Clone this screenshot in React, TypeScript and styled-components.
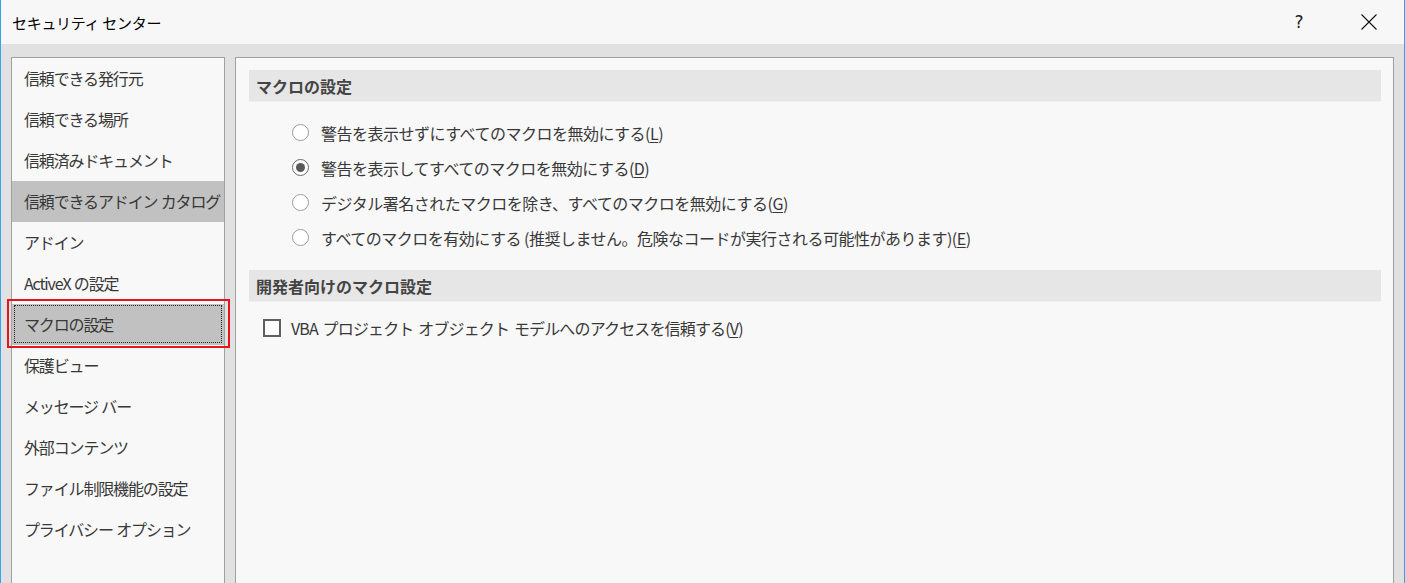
import React from "react"
import styled, { createGlobalStyle } from "styled-components"

const GlobalStyle = createGlobalStyle`
    html, body {
        margin: 0;
        padding: 0;
        height: 100%;
        overflow: hidden;
        background: #e1e1e1;
    }
    #root {
        height: 100%;
    }
`

const FONT = `"Noto Sans CJK JP", "Noto Sans", sans-serif`

const Window = styled.div`
    display: flex;
    flex-direction: column;
    height: 100vh;
    box-sizing: border-box;
    border-left: 1px solid #35a2ee;
    border-right: 1px solid #35a2ee;
    background: #e1e1e1;
    font-family: ${FONT};
    color: #3a3a3a;
`

const TitleBar = styled.div`
    display: flex;
    align-items: center;
    height: 44px;
    flex-shrink: 0;
    background: #f7f7f7;
    padding-left: 11px;
`

const Title = styled.div`
    flex: 1;
    font-size: 15px;
    color: #000;
    letter-spacing: -0.3px;
`

const TitleButton = styled.div`
    width: 70px;
    height: 44px;
    display: flex;
    align-items: center;
    justify-content: center;
    font-family: "DejaVu Sans", sans-serif;
    font-size: 17px;
    color: #222;
`

const Body = styled.div`
    flex: 1;
    display: flex;
    gap: 10px;
    padding: 13px 10px 0 10px;
    min-height: 0;
`

const Panel = styled.div<{ $grow?: boolean }>`
    box-sizing: border-box;
    background: #f8f8f8;
    border: 1px solid #a0a0a0;
    border-bottom: none;
    ${p => (p.$grow ? "flex: 1;" : "width: 214px; flex-shrink: 0;")}
`

const NavList = styled.div`
    display: flex;
    flex-direction: column;
`

const NavItem = styled.div<{ $selected?: boolean; $focused?: boolean }>`
    position: relative;
    height: 41px;
    box-sizing: border-box;
    display: flex;
    align-items: center;
    padding: 0 0 2px 12px;
    font-size: 16px;
    letter-spacing: -1.15px;
    word-spacing: 1px;
    white-space: nowrap;
    color: #383838;
    background: ${p => (p.$selected ? "#c1c1c1" : "transparent")};
    ${p =>
        p.$focused &&
        `
        &::before {
            content: "";
            position: absolute;
            inset: 1px 2px 2px 2px;
            border: 1px dotted #222;
        }
    `}
`

const Highlight = styled.div`
    position: absolute;
    top: -5px;
    bottom: -3px;
    left: -5px;
    right: -6px;
    border: 2px solid #e8141b;
    pointer-events: none;
`

const Content = styled.div`
    display: flex;
    flex-direction: column;
    padding: 12px 12px 0 13px;
`

const SectionHeader = styled.div`
    height: 32px;
    box-sizing: border-box;
    display: flex;
    align-items: center;
    padding-left: 7px;
    background: #e6e6e6;
    border-bottom: 1px solid #efefef;
    font-size: 16px;
    font-weight: bold;
    color: #444;
`

const OptionGroup = styled.div<{ $indent: number; $top: number; $bottom: number }>`
    display: flex;
    flex-direction: column;
    padding-left: ${p => p.$indent}px;
    margin: ${p => p.$top}px 0 ${p => p.$bottom}px;
`

const OptionRow = styled.label`
    height: 35px;
    display: flex;
    align-items: center;
    gap: 12px;
    font-size: 16px;
    letter-spacing: -0.5px;
    white-space: nowrap;
    color: #383838;
`

const Radio = styled.span<{ $checked?: boolean }>`
    position: relative;
    width: 17px;
    height: 17px;
    box-sizing: border-box;
    border-radius: 50%;
    border: 1px solid ${p => (p.$checked ? "#6a6a6a" : "#9a9a9a")};
    background: #fff;
    flex-shrink: 0;
    ${p =>
        p.$checked &&
        `
        &::after {
            content: "";
            position: absolute;
            left: 3px;
            top: 3px;
            width: 9px;
            height: 9px;
            border-radius: 50%;
            background: #5a5a5a;
        }
    `}
`

const Checkbox = styled.span`
    width: 18px;
    height: 18px;
    box-sizing: border-box;
    border: 2px solid #5f5f5f;
    background: #fff;
    flex-shrink: 0;
    margin-right: -2px;
`

const CheckLabel = styled.span`
    letter-spacing: -0.85px;
    word-spacing: 2px;
`

const Key = styled.span`
    text-decoration: underline;
    text-underline-offset: 2px;
`

const navItems = [
    "信頼できる発行元",
    "信頼できる場所",
    "信頼済みドキュメント",
    "信頼できるアドイン カタログ",
    "アドイン",
    "ActiveX の設定",
    "マクロの設定",
    "保護ビュー",
    "メッセージ バー",
    "外部コンテンツ",
    "ファイル制限機能の設定",
    "プライバシー オプション",
]

const radios = [
    { text: "警告を表示せずにすべてのマクロを無効にする", key: "L" },
    { text: "警告を表示してすべてのマクロを無効にする", key: "D", checked: true },
    { text: "デジタル署名されたマクロを除き、すべてのマクロを無効にする", key: "G" },
    { text: "すべてのマクロを有効にする (推奨しません。危険なコードが実行される可能性があります)", key: "E" },
]

function CloseIcon() {
    return (
        <svg width="16" height="16" viewBox="0 0 16 16">
            <path d="M0.5 0.5 L15.5 15.5 M15.5 0.5 L0.5 15.5" stroke="#111" strokeWidth="1.1" fill="none" />
        </svg>
    )
}

export default function App() {
    return (
        <>
            <GlobalStyle />
            <Window>
                <TitleBar>
                    <Title>セキュリティ センター</Title>
                    <TitleButton>?</TitleButton>
                    <TitleButton>
                        <CloseIcon />
                    </TitleButton>
                </TitleBar>
                <Body>
                    <Panel>
                        <NavList>
                            {navItems.map((item, i) => (
                                <NavItem key={item} $selected={i === 3 || i === 6} $focused={i === 6}>
                                    {item}
                                    {i === 6 && <Highlight />}
                                </NavItem>
                            ))}
                        </NavList>
                    </Panel>
                    <Panel $grow>
                        <Content>
                            <SectionHeader>マクロの設定</SectionHeader>
                            <OptionGroup $indent={43} $top={13} $bottom={15}>
                                {radios.map(r => (
                                    <OptionRow key={r.key}>
                                        <Radio $checked={r.checked} />
                                        <span>
                                            {r.text}(<Key>{r.key}</Key>)
                                        </span>
                                    </OptionRow>
                                ))}
                            </OptionGroup>
                            <SectionHeader>開発者向けのマクロ設定</SectionHeader>
                            <OptionGroup $indent={14} $top={8} $bottom={0}>
                                <OptionRow>
                                    <Checkbox />
                                    <CheckLabel>
                                        VBA プロジェクト オブジェクト モデルへのアクセスを信頼する(<Key>V</Key>)
                                    </CheckLabel>
                                </OptionRow>
                            </OptionGroup>
                        </Content>
                    </Panel>
                </Body>
            </Window>
        </>
    )
}
